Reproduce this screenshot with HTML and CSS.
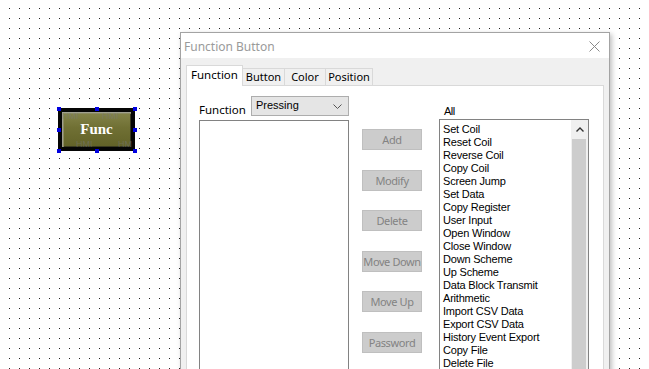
FILE: index.html
```html
<!DOCTYPE html>
<html lang="en">
<head>
    <meta charset="UTF-8">
    <title>Function Button</title>
    <link rel="stylesheet" href="styles.css">
</head>
<body>

    <main class="canvas">

        <!-- widget placed on the design canvas -->
        <div class="widget">
            <div class="func-btn">Func</div>
            <span class="wm wm-1">HMI</span>
            <span class="wm wm-2">HMI</span>
            <span class="wm wm-3">HMI</span>
            <span class="wm wm-4">HM</span>
            <i class="handle h-tl"></i>
            <i class="handle h-tc"></i>
            <i class="handle h-tr"></i>
            <i class="handle h-ml"></i>
            <i class="handle h-mr"></i>
            <i class="handle h-bl"></i>
            <i class="handle h-bc"></i>
            <i class="handle h-br"></i>
        </div>

        <!-- property dialog -->
        <section class="dialog">
            <div class="titlebar">
                <span class="title">Function Button</span>
                <svg class="close" width="11" height="11" viewBox="0 0 11 11">
                    <path d="M0.5 0.5 L10.5 10.5 M10.5 0.5 L0.5 10.5" stroke="#8a8a8a" stroke-width="1" fill="none"/>
                </svg>
            </div>

            <div class="dialog-body">
                <div class="tabs">
                    <div class="tab active">Function</div>
                    <div class="tab">Button</div>
                    <div class="tab">Color</div>
                    <div class="tab">Position</div>
                </div>

                <div class="panel">
                    <div class="col">
                        <div class="col-head">
                            <span class="label">Function</span>
                            <div class="combo">
                                <span>Pressing</span>
                                <svg width="9" height="5" viewBox="0 0 9 5">
                                    <path d="M0.5 0.5 L4.5 4.5 L8.5 0.5" stroke="#555" stroke-width="1" fill="none"/>
                                </svg>
                            </div>
                        </div>
                        <div class="listbox"></div>
                    </div>

                    <div class="actions">
                        <button disabled>Add</button>
                        <button disabled>Modify</button>
                        <button disabled>Delete</button>
                        <button disabled>Move Down</button>
                        <button disabled>Move Up</button>
                        <button disabled>Password</button>
                    </div>

                    <div class="col col-right">
                        <div class="col-head all">All</div>
                        <div class="listbox list-all">
                            <ul class="items">
                                <li>Set Coil</li>
                                <li>Reset Coil</li>
                                <li>Reverse Coil</li>
                                <li>Copy Coil</li>
                                <li>Screen Jump</li>
                                <li>Set Data</li>
                                <li>Copy Register</li>
                                <li>User Input</li>
                                <li>Open Window</li>
                                <li>Close Window</li>
                                <li>Down Scheme</li>
                                <li>Up Scheme</li>
                                <li>Data Block Transmit</li>
                                <li>Arithmetic</li>
                                <li>Import CSV Data</li>
                                <li>Export CSV Data</li>
                                <li>History Event Export</li>
                                <li>Copy File</li>
                                <li>Delete File</li>
                            </ul>
                            <div class="scrollbar">
                                <div class="arrow">
                                    <svg width="8" height="5" viewBox="0 0 8 5">
                                        <path d="M0.5 4.5 L4 1 L7.5 4.5" stroke="#333" stroke-width="1.4" fill="none"/>
                                    </svg>
                                </div>
                                <div class="thumb"></div>
                            </div>
                        </div>
                    </div>
                </div>
            </div>
        </section>

    </main>

</body>
</html>
```

FILE: styles.css
```css
/* General */
body {
    margin: 0;
    padding: 0;
    overflow: hidden;
    font-family: 'Noto Sans', sans-serif;
}

/* Design canvas with dot grid */
.canvas {
    position: relative;
    width: 649px;
    height: 369px;
    overflow: hidden;
    background-color: #fff;
    background-image: conic-gradient(at 1px 1px, transparent 75%, #222 0);
    background-size: 10px 10px;
    background-position: 9px 8px;
}

/* Func widget */
.widget {
    position: absolute;
    left: 58px;
    top: 108px;
    width: 77px;
    height: 43px;
}

.func-btn {
    box-sizing: border-box;
    width: 100%;
    height: 100%;
    border: 4px solid #050505;
    box-shadow: inset 1px 1px 0 #a0a090, inset 2px 2px 0 #8a8a60, inset -1px -1px 0 #3a3a20;
    background: linear-gradient(#84844a, #707034 45%, #626228);
    color: #fff;
    font-family: 'Liberation Serif', serif;
    font-weight: bold;
    font-size: 15px;
    display: flex;
    align-items: center;
    justify-content: center;
    padding-bottom: 1px;
}

.wm {
    position: absolute;
    font-family: 'Liberation Sans', sans-serif;
    font-size: 9px;
    color: rgba(120, 120, 120, 0.55);
}

.wm-1 { left: 4px; top: 3px; }
.wm-2 { left: 44px; top: 3px; }
.wm-3 { left: 18px; top: 31px; }
.wm-4 { left: 60px; top: 31px; }

.handle {
    position: absolute;
    width: 4px;
    height: 4px;
    background: #0000e0;
}

.h-tl { left: -1px; top: -1px; }
.h-tc { left: 37px; top: -1px; }
.h-tr { left: 75px; top: -1px; }
.h-ml { left: -1px; top: 20px; }
.h-mr { left: 75px; top: 20px; }
.h-bl { left: -1px; top: 41px; }
.h-bc { left: 37px; top: 41px; }
.h-br { left: 75px; top: 41px; }

/* Dialog window */
.dialog {
    position: absolute;
    left: 180px;
    top: 32px;
    width: 430px;
    height: 400px;
    box-sizing: border-box;
    border: 1px solid #a3a3a3;
    background: #f0f0f0;
    box-shadow: 2px 2px 5px rgba(0, 0, 0, 0.25);
}

.titlebar {
    height: 25px;
    background: #fff;
    display: flex;
    align-items: center;
    justify-content: space-between;
    padding: 0 9px 0 3px;
}

.title {
    font-size: 12px;
    color: #9a9a9a;
    margin-top: 1px;
}

.close {
    margin-top: 1px;
}

.dialog-body {
    padding: 7px 5px 0 5px;
}

/* Tabs */
.tabs {
    display: flex;
    align-items: flex-end;
    height: 20px;
    position: relative;
    z-index: 1;
}

.tab {
    box-sizing: border-box;
    height: 17px;
    border: 1px solid #d9d9d9;
    border-bottom: none;
    border-left: none;
    background: #f0f0f0;
    font-size: 11px;
    line-height: 16px;
    color: #000;
    text-align: center;
    white-space: nowrap;
}

.tab.active {
    height: 21px;
    margin-bottom: -1px;
    background: #fff;
    border-left: 1px solid #d9d9d9;
    line-height: 18px;
    font-size: 11.5px;
    width: 57px;
}

.tab:nth-child(2) { width: 42px; }
.tab:nth-child(3) { width: 41px; }
.tab:nth-child(4) { width: 47px; }

/* Tab panel */
.panel {
    display: flex;
    gap: 13px;
    height: 300px;
    background: #fff;
    border: 1px solid #d9d9d9;
    padding: 10px 12px 0 12px;
}

.col {
    width: 150px;
    display: flex;
    flex-direction: column;
}

.col-right {
    margin-left: 4px;
}

.col-head {
    height: 24px;
    display: flex;
    align-items: flex-start;
    font-size: 11.5px;
}

.label {
    width: 52px;
    margin-top: 6px;
}

.combo {
    box-sizing: border-box;
    width: 98px;
    height: 20px;
    border: 1px solid #adadad;
    background: #e5e5e5;
    display: flex;
    align-items: center;
    justify-content: space-between;
    padding: 0 6px 0 4px;
    font-family: 'Liberation Sans', sans-serif;
    font-size: 11px;
}

.combo span {
    margin-top: -3px;
}

.all {
    height: 23px;
    padding-left: 5px;
    align-items: flex-end;
    font-family: 'Liberation Sans', sans-serif;
    font-size: 11px;
    letter-spacing: -0.5px;
    line-height: 15px;
}

.listbox {
    box-sizing: border-box;
    height: 260px;
    border: 1px solid #828282;
    background: #fff;
}

.list-all {
    display: flex;
    justify-content: space-between;
}

.items {
    list-style: none;
    margin: 0;
    padding: 3px 0 0 3px;
    font-family: 'Liberation Sans', sans-serif;
    font-size: 11px;
    letter-spacing: -0.2px;
    line-height: 13px;
    color: #000;
}

.scrollbar {
    width: 17px;
    background: #f0f0f0;
    display: flex;
    flex-direction: column;
}

.arrow {
    height: 18px;
    display: flex;
    align-items: center;
    justify-content: center;
}

.thumb {
    flex: 1;
    margin: 1px 2px 0 1px;
    background: #cdcdcd;
}

/* Disabled action buttons */
.actions {
    width: 60px;
    display: flex;
    flex-direction: column;
    gap: 19.6px;
    padding-top: 33px;
}

.actions button {
    box-sizing: border-box;
    width: 60px;
    height: 21px;
    padding: 0;
    border: 1px solid #bfbfbf;
    background: #cccccc;
    color: #838383;
    font-family: 'Noto Sans', sans-serif;
    font-size: 11px;
    letter-spacing: -0.4px;
    white-space: nowrap;
    overflow: visible;
}
```
